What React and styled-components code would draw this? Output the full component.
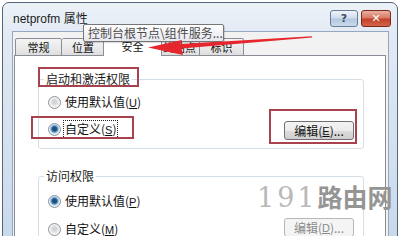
import React from "react";
import styled, { createGlobalStyle } from "styled-components";

const GlobalStyle = createGlobalStyle`
  html, body {
    margin: 0;
    padding: 0;
    background: #ffffff;
    overflow: hidden;
  }
  body {
    font-family: "Noto Sans CJK SC", "Liberation Sans", sans-serif;
    font-size: 12px;
  }
`;

const Page = styled.div`
  position: relative;
  width: 400px;
  height: 236px;
  overflow: hidden;
  background: #ffffff;
`;

const Frame = styled.div`
  position: absolute;
  left: 2px;
  top: 2px;
  width: 377px;
  height: 250px;
  padding: 0 8px 0 9px;
  border: 1px solid #56667a;
  border-radius: 7px 7px 0 0;
  background: linear-gradient(180deg, #edf2f8 0%, #e1e9f3 14%, #c6d8ec 100%);
  display: flex;
  flex-direction: column;
`;

const TitleBar = styled.div`
  height: 28px;
  display: flex;
  align-items: center;
  justify-content: space-between;
  padding-left: 1px;
`;

const TitleText = styled.span`
  font-family: "Liberation Sans", "Noto Sans CJK SC", sans-serif;
  font-size: 12px;
  color: #1e1e1e;
  padding-top: 1px;
`;

const TitleButtons = styled.div`
  display: flex;
  gap: 3px;
  margin-right: -2px;
  margin-top: 2px;
`;

const CaptionButton = styled.div`
  width: ${(p) => p.$w}px;
  height: 17px;
  border-radius: 3px;
  border: 1px solid ${(p) => (p.$close ? "#7a2a1c" : "#6a7d96")};
  background: ${(p) =>
    p.$close
      ? "linear-gradient(180deg, #eab1a3 0%, #d87a63 45%, #c2412a 55%, #d4654a 100%)"
      : "linear-gradient(180deg, #eef3f9 0%, #d1deee 45%, #b4c8e0 55%, #c9d9ec 100%)"};
  box-sizing: border-box;
  display: flex;
  align-items: center;
  justify-content: center;
  color: ${(p) => (p.$close ? "#ffffff" : "#3b4a60")};
  font-family: "DejaVu Sans", sans-serif;
  font-weight: bold;
  font-size: 11px;
  line-height: 1;
`;

const Client = styled.div`
  flex: 1;
  border: 1px solid #93a7c0;
  border-bottom: none;
  background: #f2f2f2;
  padding: 3px 2px 0 1px;
  display: flex;
  flex-direction: column;
`;

const TabRow = styled.div`
  display: flex;
  align-items: flex-end;
  height: 21px;
  padding-left: 1px;
  margin-bottom: -1px;
  position: relative;
  z-index: 1;
`;

const Tab = styled.div`
  width: ${(p) => p.$w}px;
  height: ${(p) => (p.$active ? 21 : 18)}px;
  box-sizing: border-box;
  border: 1px solid #8b8e97;
  border-bottom: ${(p) => (p.$active ? "none" : "1px solid #8b8e97")};
  border-left: ${(p) => (p.$first || p.$active ? "1px solid #8b8e97" : "none")};
  border-radius: 2px 2px 0 0;
  margin: ${(p) => (p.$active ? "0 -2px" : "0")};
  background: ${(p) =>
    p.$active ? "#ffffff" : "linear-gradient(180deg, #f4f4f4 0%, #ebebeb 50%, #dedede 100%)"};
  display: flex;
  align-items: center;
  justify-content: center;
  font-size: 11px;
  color: #111;
  position: relative;
  z-index: ${(p) => (p.$active ? 2 : 1)};
`;

const Panel = styled.div`
  flex: 1;
  background: #ffffff;
  border: 1px solid #898c95;
  border-bottom: none;
  padding: 15px 21px 0 23px;
  display: flex;
  flex-direction: column;
  gap: 19px;
`;

const Group = styled.fieldset`
  margin: 0;
  border: 1px solid #d5dfe5;
  border-radius: 3px;
  padding: ${(p) => p.$pt}px 9px 8px 9px;
  display: grid;
  grid-template-columns: 1fr auto;
  row-gap: ${(p) => p.$gap}px;
  align-items: center;
`;

const Legend = styled.legend`
  padding: 0 2px;
  margin-left: -4px;
  font-size: 12px;
  line-height: 16px;
  color: #1a1a1a;
`;

const RadioRow = styled.label`
  grid-column: 1;
  height: 20px;
  display: flex;
  align-items: center;
  gap: 3px;
  font-size: 12px;
  color: #111;
`;

const RadioDot = styled.span`
  width: 13px;
  height: 13px;
  box-sizing: border-box;
  border-radius: 50%;
  border: 1px solid #8f9296;
  background: ${(p) =>
    p.$on
      ? "radial-gradient(circle at 50% 45%, #1f4f7c 0 2px, #4f8cc0 3px, #9cc6e8 4px, #e9eef2 5px)"
      : "radial-gradient(circle at 50% 45%, #d2d4d6 0 2px, #e0e2e4 3px, #f4f4f4 5px)"};
  flex-shrink: 0;
`;

const LabelText = styled.span`
  padding: 0 1px;
  outline: ${(p) => (p.$focus ? "1px dotted #222" : "none")};
  line-height: 16px;
`;

const Key = styled.u`
  font-family: "Liberation Sans", sans-serif;
  font-size: 11px;
`;

const EditButton = styled.div`
  grid-column: 2;
  grid-row: 2;
  width: 70px;
  height: 19px;
  box-sizing: border-box;
  border: 1px solid ${(p) => (p.$disabled ? "#b4b8bc" : "#707070")};
  border-radius: 3px;
  background: ${(p) =>
    p.$disabled ? "#f4f4f4" : "linear-gradient(180deg, #f3f3f3 0%, #ebebeb 50%, #dddddd 51%, #cfcfcf 100%)"};
  display: flex;
  align-items: center;
  justify-content: center;
  font-size: 12px;
  line-height: 16px;
  color: ${(p) => (p.$disabled ? "#8a8a8a" : "#111")};
  margin-top: ${(p) => p.$mt}px;
  align-self: start;
`;

const Tooltip = styled.div`
  position: absolute;
  left: 83px;
  top: 24px;
  width: 141px;
  height: 18px;
  box-sizing: border-box;
  border: 1px solid #767676;
  border-radius: 2px;
  background: linear-gradient(180deg, #ffffff 0%, #e6e7ef 100%);
  padding: 0 4px;
  font-size: 12px;
  line-height: 16px;
  color: #4a4a4a;
  white-space: nowrap;
  overflow: hidden;
  z-index: 5;
  box-shadow: 1px 1px 1px rgba(0, 0, 0, 0.15);
`;

const Mark = styled.div`
  position: absolute;
  left: ${(p) => p.$x}px;
  top: ${(p) => p.$y}px;
  width: ${(p) => p.$w}px;
  height: ${(p) => p.$h}px;
  box-sizing: border-box;
  border: 2px solid #a8424f;
  z-index: 6;
  pointer-events: none;
`;

const ArrowSvg = styled.svg`
  position: absolute;
  left: 0;
  top: 0;
  z-index: 7;
  pointer-events: none;
`;

const Watermark = styled.div`
  position: absolute;
  left: 257px;
  top: 184px;
  display: flex;
  align-items: baseline;
  z-index: 4;
  line-height: 1;
`;

const WmDigits = styled.span`
  font-family: "DejaVu Serif", serif;
  font-size: 27px;
  letter-spacing: 3px;
  color: #b9b9b9;
`;

const WmText = styled.span`
  font-family: "Noto Sans CJK SC", sans-serif;
  font-weight: bold;
  font-size: 25px;
  color: #959595;
`;

const tabs = [
  { name: "常规", w: 47 },
  { name: "位置", w: 43 },
  { name: "安全", w: 59, active: true },
  { name: "终结点", w: 40 },
  { name: "标识", w: 44 },
];

export default function App() {
  return (
    <Page>
      <GlobalStyle />
      <Frame>
        <TitleBar>
          <TitleText>netprofm 属性</TitleText>
          <TitleButtons>
            <CaptionButton $w={28}>?</CaptionButton>
            <CaptionButton $w={30} $close>
              ✕
            </CaptionButton>
          </TitleButtons>
        </TitleBar>
        <Client>
          <TabRow>
            {tabs.map((t, i) => (
              <Tab key={t.name} $w={t.w} $active={t.active} $first={i === 0}>
                {t.name}
              </Tab>
            ))}
          </TabRow>
          <Panel>
            <Group $pt={5} $gap={7}>
              <Legend>启动和激活权限</Legend>
              <RadioRow>
                <RadioDot />
                <LabelText>
                  使用默认值(<Key>U</Key>)
                </LabelText>
              </RadioRow>
              <RadioRow>
                <RadioDot $on />
                <LabelText $focus>
                  自定义(<Key>S</Key>)
                </LabelText>
              </RadioRow>
              <EditButton $mt={2}>
                编辑(<Key>E</Key>)...
              </EditButton>
            </Group>
            <Group $pt={7} $gap={8}>
              <Legend>访问权限</Legend>
              <RadioRow>
                <RadioDot $on />
                <LabelText>
                  使用默认值(<Key>P</Key>)
                </LabelText>
              </RadioRow>
              <RadioRow>
                <RadioDot />
                <LabelText>
                  自定义(<Key>M</Key>)
                </LabelText>
              </RadioRow>
              <EditButton $disabled $mt={-1}>
                编辑(<Key>D</Key>)...
              </EditButton>
            </Group>
          </Panel>
        </Client>
      </Frame>

      <Tooltip>控制台根节点\组件服务...</Tooltip>

      <Mark $x={38} $y={67} $w={101} $h={20} />
      <Mark $x={31} $y={116} $w={103} $h={23} />
      <Mark $x={269} $y={109} $w={88} $h={35} />

      <ArrowSvg width="400" height="236" viewBox="0 0 400 236">
        <polygon
          points="148,47.5 182,40 180.5,44 312,36.2 312,37.6 181.5,48.5 183,55"
          fill="#e5262c"
        />
      </ArrowSvg>

      <Watermark>
        <WmDigits>191</WmDigits>
        <WmText>路由网</WmText>
      </Watermark>
    </Page>
  );
}
